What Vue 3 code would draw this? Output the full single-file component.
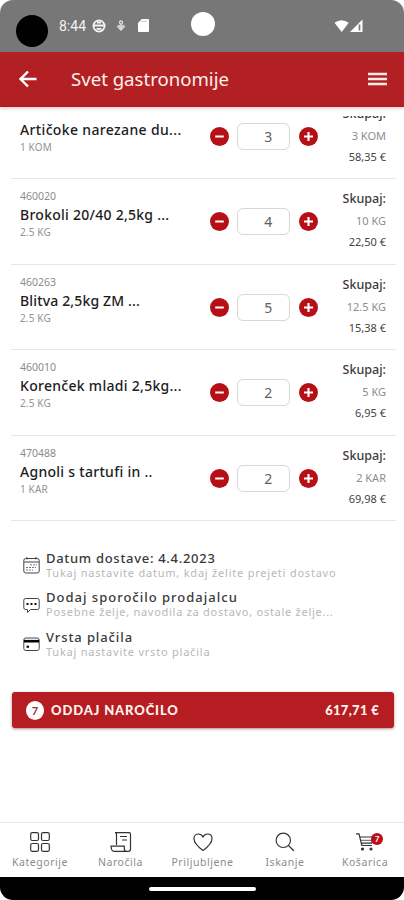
<script setup>
const items = [
  { code: '', name: 'Artičoke narezane du...', unit: '1 KOM', qty: 3, total: '3 KOM', price: '58,35 €', spacing: 0.35 },
  { code: '460020', name: 'Brokoli 20/40 2,5kg ...', unit: '2.5 KG', qty: 4, total: '10 KG', price: '22,50 €', spacing: 0.26 },
  { code: '460263', name: 'Blitva 2,5kg ZM ...', unit: '2.5 KG', qty: 5, total: '12.5 KG', price: '15,38 €', spacing: 0.15 },
  { code: '460010', name: 'Korenček mladi 2,5kg...', unit: '2.5 KG', qty: 2, total: '5 KG', price: '6,95 €', spacing: 0.29 },
  { code: '470488', name: 'Agnoli s tartufi in ..', unit: '1 KAR', qty: 2, total: '2 KAR', price: '69,98 €', spacing: 0.28 }
]
const options = [
  { icon: 'calendar', title: 'Datum dostave: 4.4.2023', hint: 'Tukaj nastavite datum, kdaj želite prejeti dostavo' },
  { icon: 'message', title: 'Dodaj sporočilo prodajalcu', hint: 'Posebne želje, navodila za dostavo, ostale želje...' },
  { icon: 'card', title: 'Vrsta plačila', hint: 'Tukaj nastavite vrsto plačila' }
]
const tabs = ['Kategorije', 'Naročila', 'Priljubljene', 'Iskanje', 'Košarica']
</script>

<template>
  <div class="phone">
    <div class="screen">
      <div class="status">
        <i class="camera"></i>
        <span class="time">8:44</span>
        <svg class="s-globe" width="14" height="14" viewBox="0 0 14 14" fill="none" stroke="#f4f4f4" stroke-width="1.800"><circle cx="7" cy="7" r="5.600" /><path d="M1.500 6.500h11M4.500 9.800h5M5 3.500h4" /></svg>
        <svg class="s-dl" width="10" height="14" viewBox="0 0 10 14" fill="none" stroke="#dedede" stroke-width="1.300"><circle cx="5" cy="3.500" r="1.500" /><path d="M5 5v6M1.200 7L5 11l3.800-4M2.500 6l2.500 2.500L7.500 6" /></svg>
        <svg class="s-sd" width="11" height="13" viewBox="0 0 11 13"><path d="M3.700 0H10a1 1 0 0 1 1 1v11a1 1 0 0 1-1 1H1a1 1 0 0 1-1-1V4z" fill="#fff" /><path d="M4 1.500v1.500M6 1.500v1.500M8 1.500v1.500" stroke="#999" stroke-width=".8" /></svg>
        <i class="lens"></i>
        <svg class="s-net" width="30" height="14" viewBox="0 0 30 14"><path d="M.5 3.800Q7.500-1.200 14.700 3.800L7.700 13z" fill="#fff" /><path d="M16 13L28.500.5V13z" fill="#fff" /><path d="M25.500 5.500v6" stroke="#777" stroke-width="1.700" /></svg>
      </div>
      <header>
        <svg width="18" height="18" viewBox="0 0 18 18" fill="none" stroke="#fff" stroke-width="2.400"><path d="M17.500 9H2M9 1.500L1.500 9 9 16.500" /></svg>
        <h1>Svet gastronomije</h1>
        <svg width="19" height="14" viewBox="0 0 19 14" stroke="#ffe9e4" stroke-width="2.700"><path d="M0 2h19M0 7h19M0 12h19" /></svg>
      </header>
      <main>
        <div class="list">
          <div v-for="item in items" :key="item.name" class="row">
            <div class="info">
              <span class="code">{{ item.code }}</span>
              <span class="name" :style="{ letterSpacing: item.spacing + 'px' }">{{ item.name }}</span>
              <span class="unit">{{ item.unit }}</span>
            </div>
            <div class="stepper">
              <svg width="19" height="19" viewBox="0 0 19 19"><circle cx="9.500" cy="9.500" r="9.500" fill="#b60f17" /><path d="M5.200 9.500h8.600" stroke="#fff" stroke-width="2" /></svg>
              <span class="qty">{{ item.qty }}</span>
              <svg width="19" height="19" viewBox="0 0 19 19"><circle cx="9.500" cy="9.500" r="9.500" fill="#b60f17" /><path d="M5 9.500h9M9.500 5v9" stroke="#fff" stroke-width="2.100" /></svg>
            </div>
            <div class="sum">
              <span class="label">Skupaj:</span>
              <span class="total">{{ item.total }}</span>
              <span class="price">{{ item.price }}</span>
            </div>
          </div>
        </div>
        <div class="options">
          <div v-for="o in options" :key="o.icon" class="option" :class="o.icon">
            <svg width="17" height="17" viewBox="0 0 17 17" fill="none" stroke="#444" stroke-width="1">
              <template v-if="o.icon === 'calendar'">
                <rect x=".8" y="1.500" width="15.400" height="14.500" rx="2" /><path d="M1 5h15" /><path d="M4 0v2.500M13 0v2.500" /><path d="M7 7.800h7M3 10.500h10M3 13h7" stroke-dasharray="2 1" stroke="#777" />
              </template>
              <template v-else-if="o.icon === 'message'">
                <path d="M2.500 1.500h12a1.700 1.700 0 0 1 1.700 1.700v7.600a1.700 1.700 0 0 1-1.700 1.700H7.500L4.500 15.500v-3h-2A1.700 1.700 0 0 1 .8 10.800V3.200a1.700 1.700 0 0 1 1.700-1.700z" /><path d="M3.500 7h10" stroke-width="2" stroke-dasharray="2 2" stroke="#111" />
              </template>
              <template v-else>
                <rect x=".8" y="2" width="15.400" height="12.500" rx="2" /><path d="M1 5.200h15" stroke="#000" stroke-width="2.600" /><path d="M3.500 10.700h2.500" stroke="#111" stroke-width="2.200" />
              </template>
            </svg>
            <div class="otext">
              <span class="otitle">{{ o.title }}</span>
              <span class="ohint">{{ o.hint }}</span>
            </div>
          </div>
        </div>
        <button class="submit">
          <span class="count">7</span>
          <span class="action">ODDAJ NAROČILO</span>
          <span class="amount">617,71 €</span>
        </button>
      </main>
      <nav>
        <div v-for="(t, i) in tabs" :key="t" class="tab" :class="'tab-' + i">
          <span class="ticon">
            <svg width="22" height="22" viewBox="0 0 22 22" fill="none" stroke="#333" stroke-width="1.200">
              <template v-if="i === 0"><rect x="1.700" y="1.700" width="7.800" height="7.800" rx="1.500" /><rect x="12.500" y="1.700" width="7.800" height="7.800" rx="1.500" /><rect x="1.700" y="12.500" width="7.800" height="7.800" rx="1.500" /><rect x="12.500" y="12.500" width="7.800" height="7.800" rx="1.500" /></template>
              <template v-else-if="i === 1"><path d="M6.500 14V3.500Q6.500 1.700 5 1.700h14.200Q20.500 1.700 20.500 3.500V18q0 2.300-2.300 2.300H3.800Q1.500 20.300 1 15.200h13.300V18q0 2.300 2.300 2.300M10 5.500h7M12 9h5" /></template>
              <path v-else-if="i === 2" d="M11 19.500C5 15 2 11.500 2 7.700 2 4.800 4 3 6.400 3 8.500 3 10 4 11 6 12 4 13.500 3 15.600 3 18 3 20 4.800 20 7.700c0 3.800-3 7.300-9 11.800z" />
              <template v-else-if="i === 3"><circle cx="9.300" cy="9.300" r="7.200" /><path d="M14.500 14.500l5.500 5.500" /></template>
              <template v-else><path d="M2 2.800h3l2.800 11.700H18M6 6h13l-1.400 6.200H7.500" /><path d="M7 9.300h11" stroke-width=".8" /><circle cx="8.500" cy="18" r="1" fill="#222" /><circle cx="17" cy="18" r="1" fill="#222" /></template>
            </svg>
            <b v-if="i === 4" class="badge">7</b>
          </span>
          <span class="tlabel">{{ t }}</span>
        </div>
      </nav>
      <div class="gesture"><i></i></div>
    </div>
  </div>
</template>

<style>
body { background: #fff; }
</style>

<style scoped>
* { box-sizing: border-box; }
.phone { width: 404px; height: 900px; background: #fff; overflow: hidden; font-family: "Noto Sans", "Open Sans", sans-serif; }
.screen { width: 404px; height: 900px; border-radius: 13px; overflow: hidden; display: flex; flex-direction: column; background: #fff; }
.status { height: 51.500px; flex: none; background: #777; display: flex; align-items: center; padding-left: 16px; }
.camera { width: 32px; height: 32px; border-radius: 50%; background: #000; margin-top: 11px; }
.time { width: 27px; margin-left: 11px; color: #f4f4f4; font: 14px/18px Roboto, sans-serif; white-space: nowrap; margin-top: 1px; }
.s-globe { margin-left: 6px; }
.s-dl { margin-left: 10px; }
.s-sd { margin-left: 12px; }
.lens { width: 24px; height: 24px; margin-left: 42px; border-radius: 50%; background: #fff; margin-top: -3px; }
.s-net { margin-left: 119px; }
header { height: 55px; flex: none; background: #b32023; border-bottom: 1px solid #b6161b; display: flex; align-items: center; padding: 0 17px 0 19px; box-shadow: 0 2px 3px rgba(120, 40, 40, .2); }
h1 { margin: 1px auto 0 34px; font-weight: 400; font-size: 18.600px; line-height: 26px; color: #fff0ec; }
main { margin-top: 9.500px; height: 706px; flex: none; overflow: hidden; display: flex; flex-direction: column; }
.list { margin: -22.500px 8px 0 11px; flex: none; }
.row { height: 85.600px; border-bottom: 1.600px solid #e6e6e6; display: grid; grid-template-columns: 190px 109px 1fr; padding: 9px 10px 0 9px; }
.info, .sum, .otext { display: flex; flex-direction: column; white-space: nowrap; }
.code { height: 17px; font-size: 10.500px; line-height: 17px; color: #8b8b8b; }
.name { font-size: 14px; line-height: 19px; height: 19px; color: #1c1c1c; font-weight: 500; }
.unit { font-size: 10px; line-height: 16px; letter-spacing: .15px; color: #929292; }
.stepper { display: flex; align-items: center; justify-content: space-between; height: 27px; margin: 20px 1.500px 0 0; }
.qty { width: 53px; height: 27px; border: 1px solid #d8d8d8; border-radius: 6px; font-size: 14px; line-height: 26px; color: #606060; padding-left: 26px; }
.sum { align-items: flex-end; }
.label { font-size: 12.500px; line-height: 22px; color: #3c3c3c; font-weight: 500; }
.total { font-size: 11px; line-height: 21px; color: #8d8d8d; }
.price { font-size: 11px; line-height: 22px; color: #444; }
.options { margin: 28.500px 22px 0; height: 118px; flex: none; }
.option { display: flex; height: 39.300px; }
.option svg { margin: 7.500px 6px 0 1px; flex: none; }
.otitle { margin-top: 1px; font-size: 13px; line-height: 15px; letter-spacing: .7px; color: #3a3a3a; font-weight: 500; }
.message .otitle { letter-spacing: 1px; }
.card .otitle { letter-spacing: .9px; }
.ohint { font-size: 11px; line-height: 13px; letter-spacing: .78px; color: #b8b8b8; }
.message .ohint { letter-spacing: .73px; }
.submit { margin: 24.500px 10px 0 12px; height: 36px; flex: none; border: 0; border-radius: 3px; background: #b51d22; color: #fff3ef; display: flex; align-items: center; padding: 0 15px 0 14px; box-shadow: 0 1px 3px rgba(110, 20, 20, .5); font: 900 13px/18px Lato, sans-serif; }
.count { width: 18px; height: 19px; border-radius: 50%; background: #fff; color: #8d3437; font-size: 11px; font-weight: 700; line-height: 19px; text-align: center; }
.action { margin: 0 auto 0 7px; letter-spacing: .88px; }
.amount { letter-spacing: .3px; }
nav { height: 55px; flex: none; border-top: 1px solid #e8e8e8; display: flex; }
.tab { display: flex; flex-direction: column; align-items: center; padding-top: 8px; width: 80px; }
.tab-1 { width: 81px; }
.tab-2 { width: 83px; }
.tab-3 { width: 82px; }
.tab-4 { width: 78px; }
.ticon { position: relative; width: 22px; height: 22px; }
.ticon svg { display: block; }
.tlabel { font-size: 10.500px; line-height: 16px; margin-top: 1px; letter-spacing: .55px; color: #8c8c8c; }
.badge { position: absolute; left: 17px; top: 2px; width: 12px; height: 12px; border-radius: 50%; background: #bb0d16; color: #fff; font: 700 8px/12px Lato, sans-serif; text-align: center; }
.gesture { height: 23px; flex: none; background: #000; display: flex; justify-content: center; padding-top: 10px; }
.gesture i { width: 107px; height: 4px; border-radius: 2px; background: #fff; }
</style>
